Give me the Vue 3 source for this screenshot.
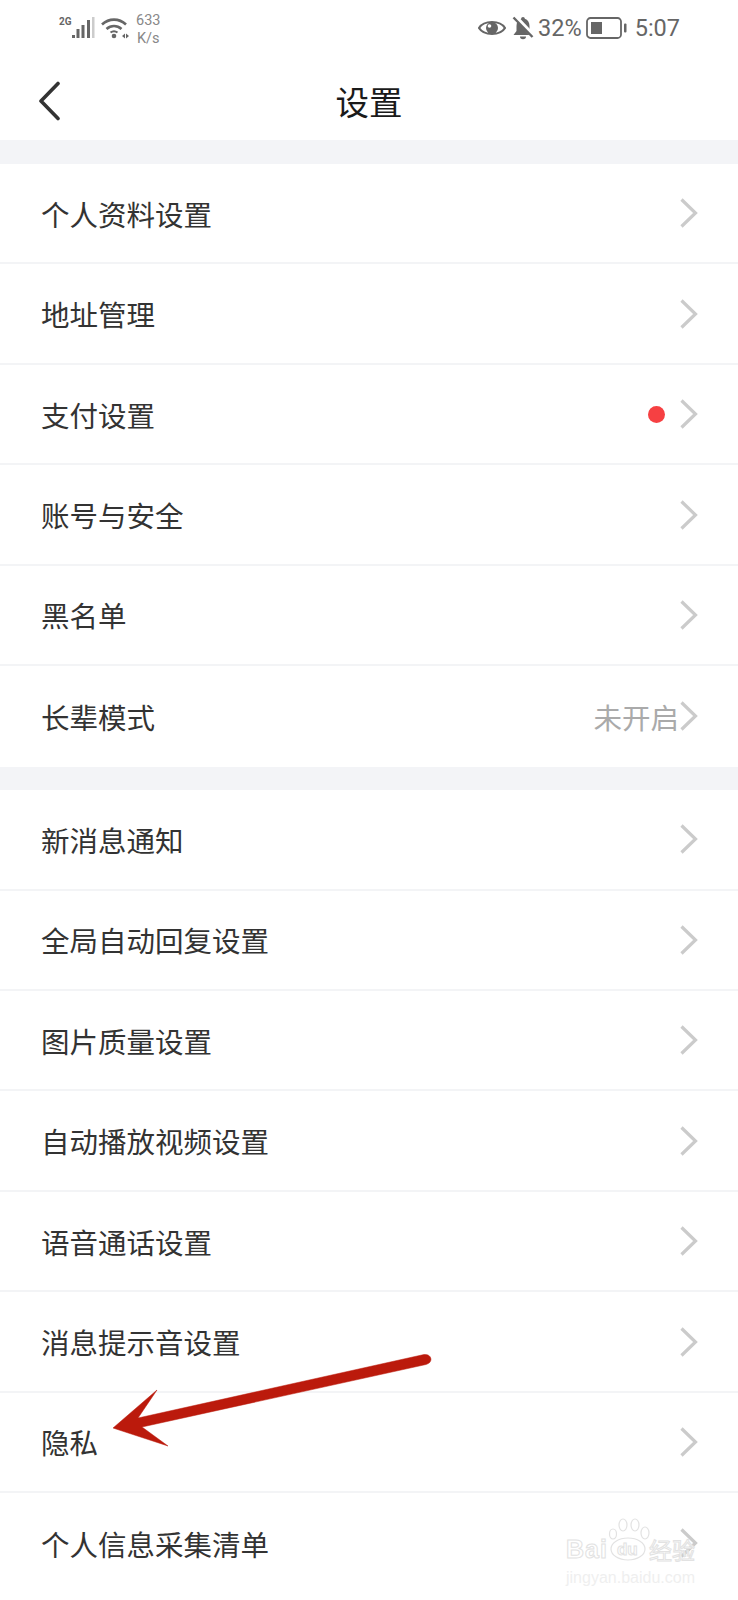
<template>
  <div class="page">
    <div class="status">
      <div class="status-left">
        <span class="net">2G</span>
        <svg class="signal" width="24" height="24" viewBox="0 0 24 24">
          <rect x="1" y="18" width="3" height="3" fill="#666" />
          <rect x="5.5" y="12" width="3" height="9" fill="#666" />
          <rect x="10.5" y="8" width="3" height="13" fill="#666" />
          <rect x="16" y="3" width="3" height="18" fill="#666" />
          <rect x="21" y="0" width="2.5" height="21" fill="#ccc" />
        </svg>
        <svg class="wifi" width="28" height="22" viewBox="0 0 28 22">
          <path d="M1 7.500C8 1 18 1 25 7.500" fill="none" stroke="#666" stroke-width="2.600" />
          <path d="M5.500 12C10 8 16 8 20.500 12" fill="none" stroke="#666" stroke-width="2.600" />
          <path d="M9.500 15.500C11.500 14 14.500 14 16.500 15.500" fill="none" stroke="#666" stroke-width="2" />
          <circle cx="13" cy="19" r="2.300" fill="#666" />
          <path d="M21 19l3-2.500v5zM28 19l-3-2.500v5z" fill="#666" />
        </svg>
        <div class="speed">633<br />K/s</div>
      </div>
      <div class="status-right">
        <svg width="28" height="20" viewBox="0 0 28 20">
          <path d="M1 10C6 2 22 2 27 10C22 18 6 18 1 10Z" fill="none" stroke="#666" stroke-width="2.200" />
          <circle cx="14" cy="10" r="6" fill="#666" />
          <circle cx="11.500" cy="8" r="1.800" fill="#fff" />
        </svg>
        <svg class="bell" width="22" height="24" viewBox="0 0 22 24">
          <path d="M11 1c-1.100 0-1.800.8-1.800 1.800C6 3.800 4.500 6.500 4.500 10v5L1.500 19h19l-3-4v-5c0-3.500-1.500-6.200-4.700-7.200C12.800 1.800 12.100 1 11 1z" fill="#666" />
          <path d="M8 20.500h6a3 2.800 0 0 1-6 0z" fill="#666" />
          <path d="M3.500 1L21 19.500" stroke="#fff" stroke-width="4.500" />
          <path d="M1.500 1.500L20.500 21" stroke="#666" stroke-width="2.400" />
        </svg>
        <span class="battery-text">32%</span>
        <svg class="battery" width="42" height="22" viewBox="0 0 42 22">
          <rect x="1" y="1" width="34" height="20" rx="3.500" fill="none" stroke="#666" stroke-width="1.800" />
          <rect x="5" y="5" width="11" height="12" fill="#666" />
          <rect x="38" y="6.500" width="2.500" height="9" rx="1" fill="#666" />
        </svg>
        <span class="clock">5:07</span>
      </div>
    </div>

    <div class="header">
      <svg class="back" width="24" height="40" viewBox="0 0 24 40">
        <path d="M20 2.500L3 20L20 37.500" fill="none" stroke="#333" stroke-width="3.600" stroke-linecap="round" stroke-linejoin="round" />
      </svg>
      <div class="title">设置</div>
    </div>

    <div v-for="(group, g) in groups" :key="g" class="group">
      <div v-for="item in group" :key="item.label" class="row">
        <span class="label">{{ item.label }}</span>
        <span v-if="item.dot" class="dot"></span>
        <span v-if="item.value" class="value">{{ item.value }}</span>
        <svg class="chev" width="20" height="30" viewBox="0 0 20 30">
          <path d="M2.500 1.500L16.500 15L2.500 28.500" fill="none" stroke="#cbcbcb" stroke-width="3.200" />
        </svg>
      </div>
    </div>

    <svg class="arrow" width="340" height="110" viewBox="0 0 340 110">
      <path d="M314 0.500Q320 0 321 5Q321 9 316 10.500L32 73L58 92L3 74L47 36L28 64Z" fill="#bb1a0c" stroke="#bb1a0c" stroke-width="0.500" stroke-linejoin="round" />
    </svg>

    <div class="mark">
      <div class="mark-top">
        <span class="bai">Bai</span>
        <span class="paw">
          <svg width="44" height="44" viewBox="0 0 44 44">
            <g fill="rgba(255,255,255,.7)" stroke="#e2e2e2" stroke-width="1.200">
              <ellipse cx="6" cy="16" rx="3.500" ry="5" />
              <ellipse cx="16" cy="7" rx="4" ry="6" />
              <ellipse cx="28" cy="7" rx="4" ry="6" />
              <ellipse cx="38" cy="15" rx="4" ry="6" />
              <ellipse cx="21" cy="31" rx="17" ry="11" />
            </g>
          </svg>
          <span class="du">du</span>
        </span>
        <span class="jy">经验</span>
      </div>
      <div class="mark-url">jingyan.baidu.com</div>
    </div>
  </div>
</template>

<script setup>
const groups = [
  [
    { label: '个人资料设置' },
    { label: '地址管理' },
    { label: '支付设置', dot: true },
    { label: '账号与安全' },
    { label: '黑名单' },
    { label: '长辈模式', value: '未开启' },
  ],
  [
    { label: '新消息通知' },
    { label: '全局自动回复设置' },
    { label: '图片质量设置' },
    { label: '自动播放视频设置' },
    { label: '语音通话设置' },
    { label: '消息提示音设置' },
    { label: '隐私' },
    { label: '个人信息采集清单' },
  ],
]
</script>

<style>
body { background: #fff; }
</style>

<style scoped>
.page {
  position: relative;
  width: 738px;
  height: 1600px;
  overflow: hidden;
  background: #fff;
  font-family: "Noto Sans CJK SC", "Noto Sans", sans-serif;
}
.status {
  height: 60px;
  display: flex;
  justify-content: space-between;
  font-family: Roboto, "Liberation Sans", sans-serif;
  color: #666;
}
.status-left {
  display: flex;
  align-items: flex-start;
  padding: 17px 0 0 59px;
}
.net {
  font-size: 10px;
  font-weight: 700;
  line-height: 10px;
  width: 12px;
}
.wifi { margin-left: 6px; }
.speed {
  margin: -5px 0 0 7px;
  font-size: 14.5px;
  line-height: 18px;
  text-align: center;
  color: #888;
}
.status-right {
  display: flex;
  align-items: center;
  height: 56px;
  padding-right: 58px;
}
.bell { margin-left: 6px; }
.battery-text {
  margin-left: 4px;
  font-size: 23.5px;
}
.battery { margin-left: 4px; }
.clock {
  margin-left: 7px;
  font-size: 23.5px;
}
.header {
  height: 80px;
  position: relative;
  display: flex;
  align-items: center;
  justify-content: center;
}
.back {
  position: absolute;
  left: 38px;
  top: 21px;
}
.title {
  font-size: 33.5px;
  line-height: 44px;
  margin-top: 2px;
  color: #1a1a1a;
}
.group {
  padding-top: 24px;
  background: #f3f4f7;
}
.group + .group { padding-top: 23.5px; }
.row {
  height: 100.45px;
  box-sizing: border-box;
  display: flex;
  align-items: center;
  padding: 0 39px 0 41px;
  background: #fff;
  border-bottom: 2px solid #f3f4f6;
}
.row:last-child { border-bottom: 0; }
.group:last-of-type .row:last-child { border-bottom: 2px solid #f3f4f6; }
.label {
  flex: 1;
  font-size: 28.5px;
  color: #333;
}
.value {
  font-size: 28.5px;
  color: #aaa;
}
.dot {
  width: 17px;
  height: 17px;
  margin-right: 14px;
  border-radius: 50%;
  background: #f64042;
}
.chev { flex: none; }
.arrow {
  position: absolute;
  left: 110px;
  top: 1354px;
}
.mark {
  position: absolute;
  left: 566px;
  top: 1518px;
  width: 140px;
  color: #fff;
  font-family: "Liberation Sans", sans-serif;
}
.mark-top {
  display: flex;
  align-items: flex-end;
  height: 44px;
}
.bai {
  font-size: 25px;
  line-height: 25px;
  font-weight: 700;
  letter-spacing: 1px;
  color: rgba(255,255,255,.7);
  -webkit-text-stroke: 1px #e2e2e2;
}
.paw {
  position: relative;
  width: 44px;
  height: 44px;
  margin-left: -1px;
}
.du {
  position: absolute;
  left: 10px;
  bottom: 3px;
  font-size: 17px;
  line-height: 18px;
  font-weight: 700;
  color: #fff;
  -webkit-text-stroke: 1px #e2e2e2;
}
.jy {
  font-family: "Noto Sans CJK SC", sans-serif;
  font-size: 23px;
  line-height: 26px;
  margin-left: -2px;
  color: #fff;
  -webkit-text-stroke: 1px #e2e2e2;
}
.mark-url {
  margin-top: 6px;
  font-size: 16px;
  line-height: 20px;
  white-space: nowrap;
  color: #efefef;
}
</style>
